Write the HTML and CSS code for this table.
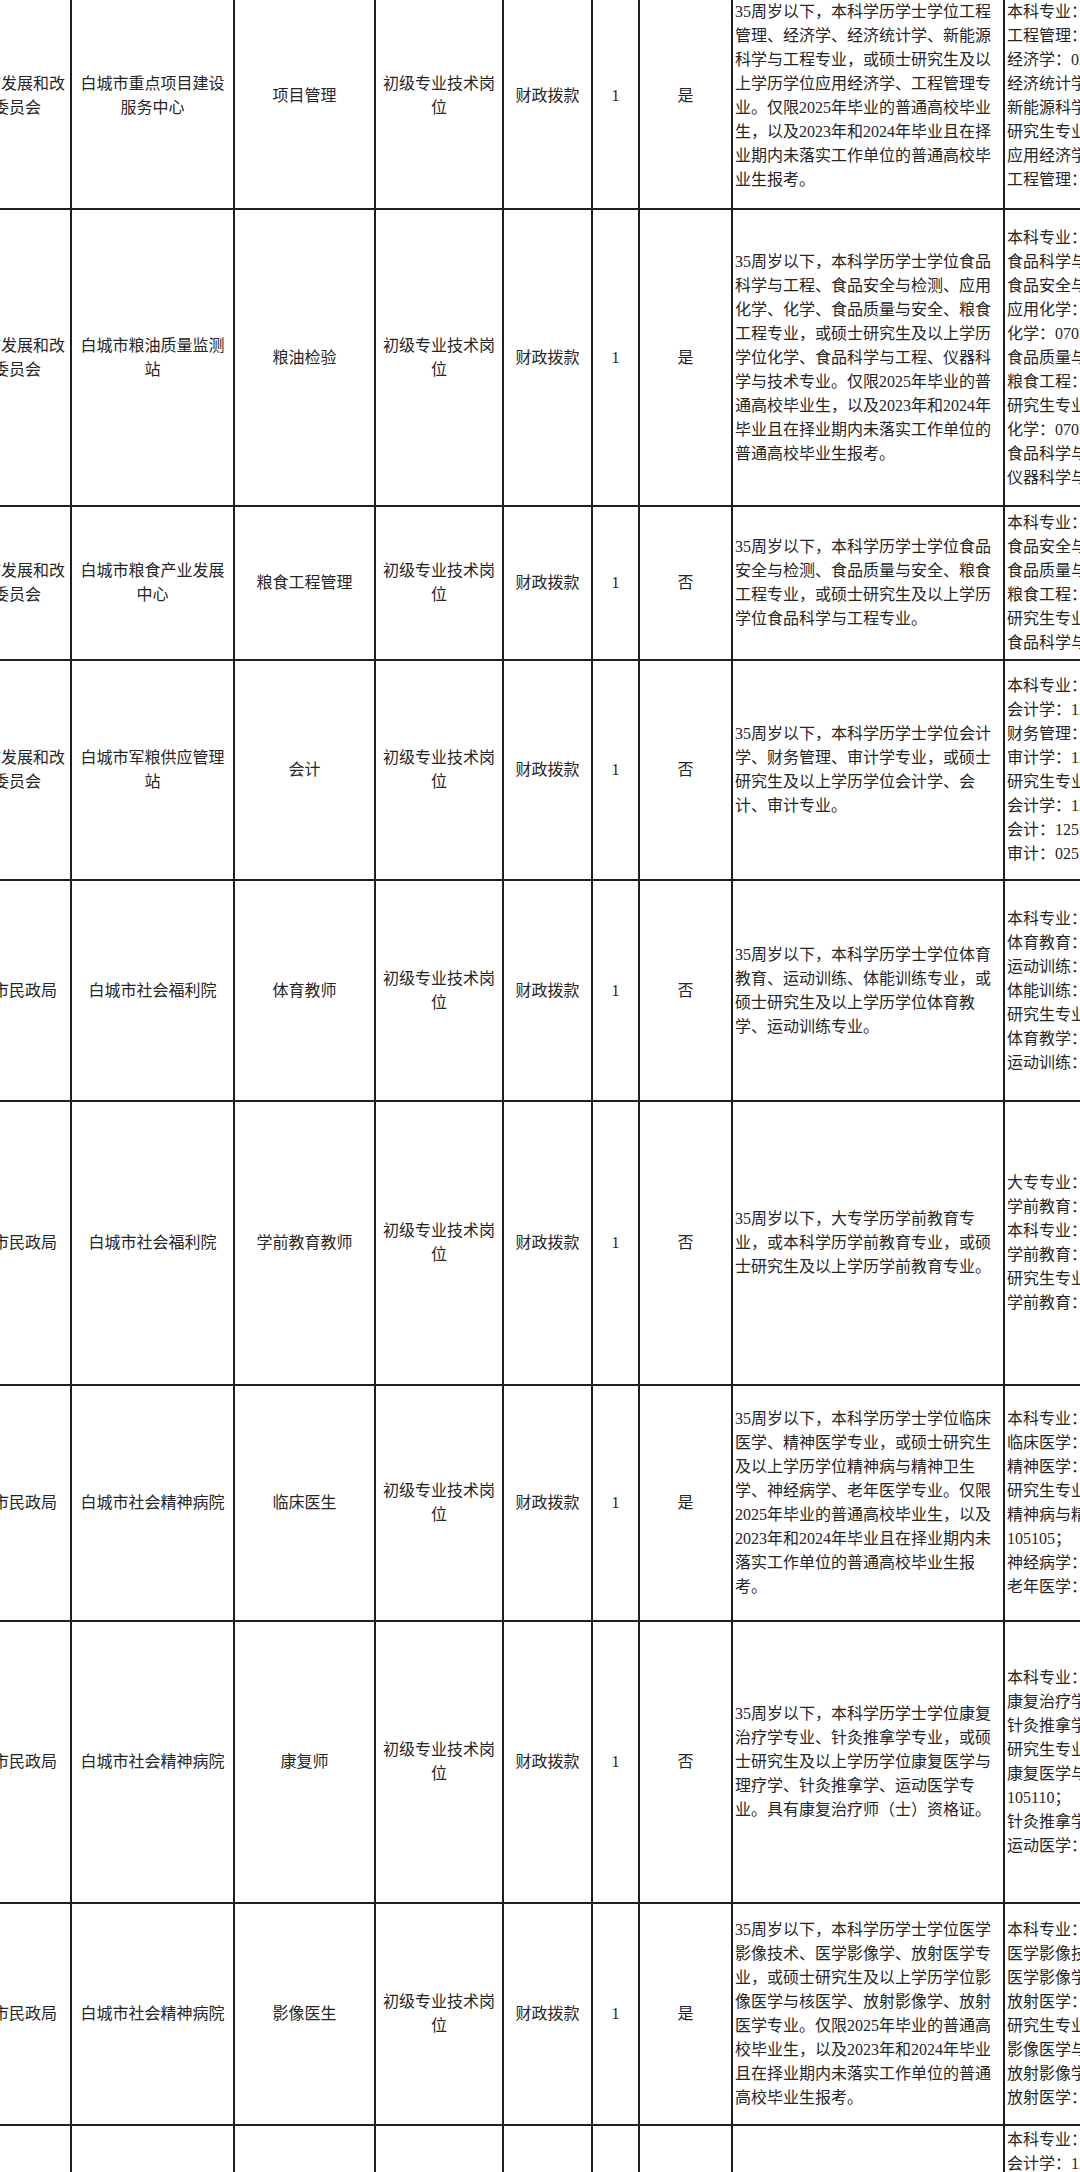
FILE: index.html
```html
<!DOCTYPE html>
<html lang="zh-CN">
<head>
<meta charset="utf-8">
<title>岗位表</title>
<link rel="stylesheet" href="styles.css">
</head>
<body>
<div class="sheet">
  <!-- row 1 -->
  <div class="cell c">白城市发展和改<br>革委员会</div>
  <div class="cell c">白城市重点项目建设<br>服务中心</div>
  <div class="cell c">项目管理</div>
  <div class="cell c">初级专业技术岗<br>位</div>
  <div class="cell c">财政拨款</div>
  <div class="cell c">1</div>
  <div class="cell c">是</div>
  <div class="cell l">35周岁以下，本科学历学士学位工程<br>管理、经济学、经济统计学、新能源<br>科学与工程专业，或硕士研究生及以<br>上学历学位应用经济学、工程管理专<br>业。仅限2025年毕业的普通高校毕业<br>生，以及2023年和2024年毕业且在择<br>业期内未落实工作单位的普通高校毕<br>业生报考。</div>
  <div class="cell l">本科专业：<br>工程管理：120103<br>经济学：020101<br>经济统计学：020102<br>新能源科学与工程：080503T<br>研究生专业：<br>应用经济学：0202<br>工程管理：1256</div>

  <!-- row 2 -->
  <div class="cell c">白城市发展和改<br>革委员会</div>
  <div class="cell c">白城市粮油质量监测<br>站</div>
  <div class="cell c">粮油检验</div>
  <div class="cell c">初级专业技术岗<br>位</div>
  <div class="cell c">财政拨款</div>
  <div class="cell c">1</div>
  <div class="cell c">是</div>
  <div class="cell l">35周岁以下，本科学历学士学位食品<br>科学与工程、食品安全与检测、应用<br>化学、化学、食品质量与安全、粮食<br>工程专业，或硕士研究生及以上学历<br>学位化学、食品科学与工程、仪器科<br>学与技术专业。仅限2025年毕业的普<br>通高校毕业生，以及2023年和2024年<br>毕业且在择业期内未落实工作单位的<br>普通高校毕业生报考。</div>
  <div class="cell l">本科专业：<br>食品科学与工程：082701<br>食品安全与检测：082709T<br>应用化学：070302<br>化学：070301<br>食品质量与安全：082702<br>粮食工程：082703<br>研究生专业：<br>化学：0703<br>食品科学与工程：0832<br>仪器科学与技术：0804</div>

  <!-- row 3 -->
  <div class="cell c">白城市发展和改<br>革委员会</div>
  <div class="cell c">白城市粮食产业发展<br>中心</div>
  <div class="cell c">粮食工程管理</div>
  <div class="cell c">初级专业技术岗<br>位</div>
  <div class="cell c">财政拨款</div>
  <div class="cell c">1</div>
  <div class="cell c">否</div>
  <div class="cell l">35周岁以下，本科学历学士学位食品<br>安全与检测、食品质量与安全、粮食<br>工程专业，或硕士研究生及以上学历<br>学位食品科学与工程专业。</div>
  <div class="cell l">本科专业：<br>食品安全与检测：082709T<br>食品质量与安全：082702<br>粮食工程：082703<br>研究生专业：<br>食品科学与工程：0832</div>

  <!-- row 4 -->
  <div class="cell c">白城市发展和改<br>革委员会</div>
  <div class="cell c">白城市军粮供应管理<br>站</div>
  <div class="cell c">会计</div>
  <div class="cell c">初级专业技术岗<br>位</div>
  <div class="cell c">财政拨款</div>
  <div class="cell c">1</div>
  <div class="cell c">否</div>
  <div class="cell l">35周岁以下，本科学历学士学位会计<br>学、财务管理、审计学专业，或硕士<br>研究生及以上学历学位会计学、会<br>计、审计专业。</div>
  <div class="cell l">本科专业：<br>会计学：120203K<br>财务管理：120204<br>审计学：120207<br>研究生专业：<br>会计学：120201<br>会计：1253<br>审计：0257</div>

  <!-- row 5 -->
  <div class="cell c">白城市民政局</div>
  <div class="cell c">白城市社会福利院</div>
  <div class="cell c">体育教师</div>
  <div class="cell c">初级专业技术岗<br>位</div>
  <div class="cell c">财政拨款</div>
  <div class="cell c">1</div>
  <div class="cell c">否</div>
  <div class="cell l">35周岁以下，本科学历学士学位体育<br>教育、运动训练、体能训练专业，或<br>硕士研究生及以上学历学位体育教<br>学、运动训练专业。</div>
  <div class="cell l">本科专业：<br>体育教育：040201<br>运动训练：040202K<br>体能训练：040208T<br>研究生专业：<br>体育教学：045201<br>运动训练：045202</div>

  <!-- row 6 -->
  <div class="cell c">白城市民政局</div>
  <div class="cell c">白城市社会福利院</div>
  <div class="cell c">学前教育教师</div>
  <div class="cell c">初级专业技术岗<br>位</div>
  <div class="cell c">财政拨款</div>
  <div class="cell c">1</div>
  <div class="cell c">否</div>
  <div class="cell l">35周岁以下，大专学历学前教育专<br>业，或本科学历学前教育专业，或硕<br>士研究生及以上学历学前教育专业。</div>
  <div class="cell l">大专专业：<br>学前教育：570102K<br>本科专业：<br>学前教育：040106<br>研究生专业：<br>学前教育：045118</div>

  <!-- row 7 -->
  <div class="cell c">白城市民政局</div>
  <div class="cell c">白城市社会精神病院</div>
  <div class="cell c">临床医生</div>
  <div class="cell c">初级专业技术岗<br>位</div>
  <div class="cell c">财政拨款</div>
  <div class="cell c">1</div>
  <div class="cell c">是</div>
  <div class="cell l">35周岁以下，本科学历学士学位临床<br>医学、精神医学专业，或硕士研究生<br>及以上学历学位精神病与精神卫生<br>学、神经病学、老年医学专业。仅限<br>2025年毕业的普通高校毕业生，以及<br>2023年和2024年毕业且在择业期内未<br>落实工作单位的普通高校毕业生报<br>考。</div>
  <div class="cell l">本科专业：<br>临床医学：100201K<br>精神医学：100205TK<br>研究生专业：<br>精神病与精神卫生学：100205、<br>105105；<br>神经病学：100204、105104<br>老年医学：100203、105103</div>

  <!-- row 8 -->
  <div class="cell c">白城市民政局</div>
  <div class="cell c">白城市社会精神病院</div>
  <div class="cell c">康复师</div>
  <div class="cell c">初级专业技术岗<br>位</div>
  <div class="cell c">财政拨款</div>
  <div class="cell c">1</div>
  <div class="cell c">否</div>
  <div class="cell l">35周岁以下，本科学历学士学位康复<br>治疗学专业、针灸推拿学专业，或硕<br>士研究生及以上学历学位康复医学与<br>理疗学、针灸推拿学、运动医学专<br>业。具有康复治疗师（士）资格证。</div>
  <div class="cell l">本科专业：<br>康复治疗学：101005<br>针灸推拿学：100502K<br>研究生专业：<br>康复医学与理疗学：100215、<br>105110；<br>针灸推拿学：100512、105709<br>运动医学：100216、105114</div>

  <!-- row 9 -->
  <div class="cell c">白城市民政局</div>
  <div class="cell c">白城市社会精神病院</div>
  <div class="cell c">影像医生</div>
  <div class="cell c">初级专业技术岗<br>位</div>
  <div class="cell c">财政拨款</div>
  <div class="cell c">1</div>
  <div class="cell c">是</div>
  <div class="cell l">35周岁以下，本科学历学士学位医学<br>影像技术、医学影像学、放射医学专<br>业，或硕士研究生及以上学历学位影<br>像医学与核医学、放射影像学、放射<br>医学专业。仅限2025年毕业的普通高<br>校毕业生，以及2023年和2024年毕业<br>且在择业期内未落实工作单位的普通<br>高校毕业生报考。</div>
  <div class="cell l">本科专业：<br>医学影像技术：101003<br>医学影像学：100203TK<br>放射医学：100206TK<br>研究生专业：<br>影像医学与核医学：100207<br>放射影像学：105124<br>放射医学：100106</div>

  <!-- row 10 -->
  <div class="cell c">白城市民政局</div>
  <div class="cell c">白城市社会精神病院</div>
  <div class="cell c">会计</div>
  <div class="cell c">初级专业技术岗<br>位</div>
  <div class="cell c">财政拨款</div>
  <div class="cell c">1</div>
  <div class="cell c">否</div>
  <div class="cell l">35周岁以下，本科学历学士学位会计<br>学、财务管理、审计学专业，或硕士<br>研究生及以上学历学位会计学、会<br>计、审计专业。</div>
  <div class="cell l">本科专业：<br>会计学：120203K<br>财务管理：120204<br>审计学：120207<br>研究生专业：<br>会计学：120201<br>会计：1253<br>审计：0257</div>
</div>
</body>
</html>
```

FILE: styles.css
```css
html, body {
  margin: 0;
  padding: 0;
  background: #ffffff;
  overflow: hidden;
  width: 1080px;
  height: 2172px;
}

body {
  font-family: "Liberation Serif", "Noto Sans CJK SC", serif;
  font-size: 16px;
  line-height: 24px;
  color: #262626;
}

.sheet {
  display: grid;
  grid-template-columns: 122px 161px 139px 126px 87px 45px 91px 270px 300px;
  grid-template-rows: 224px 295px 152px 218px 219px 282px 234px 280px 220px auto;
  gap: 2px;
  background: #1f1f1f;
  border: 2px solid #1f1f1f;
  width: max-content;
  margin: -18px 0 0 -54px;
}

.cell {
  background: #ffffff;
  display: flex;
  align-items: center;
  white-space: nowrap;
  overflow: hidden;
}

.c {
  justify-content: center;
  text-align: center;
}

.l {
  justify-content: flex-start;
  text-align: left;
  padding: 2px 0 2px 2px;
}
```
